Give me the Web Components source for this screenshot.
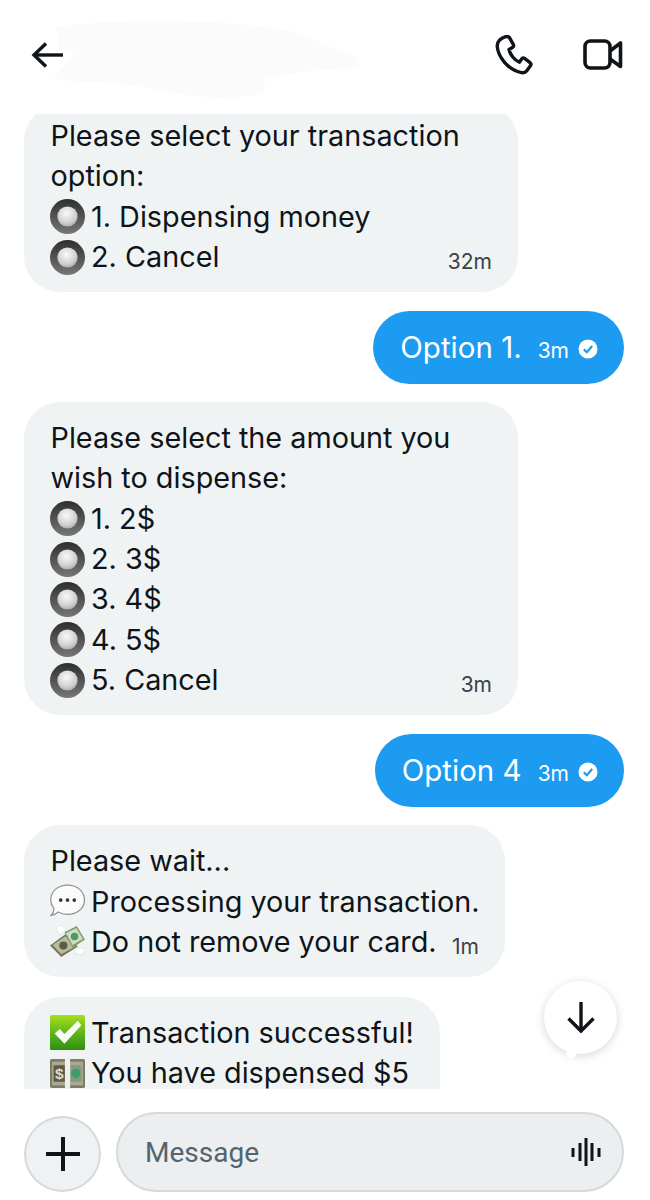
<!DOCTYPE html>
<html>
<head>
<meta charset="utf-8">
<title>Chat</title>
<style>
  html, body { margin: 0; padding: 0; background: #fff; }
  body { width: 650px; height: 1200px; overflow: hidden; font-family: Inter, "Liberation Sans", sans-serif; color: #0f1419; }
</style>
</head>
<body>
<chat-screen>
  <chat-header slot="header"></chat-header>
  <chat-bubble first time="32m">
    <div>Please select your transaction</div>
    <div>option:</div>
    <chat-line icon="radio">1. Dispensing money</chat-line>
    <chat-line icon="radio">2. Cancel</chat-line>
  </chat-bubble>
  <chat-reply time="3m">Option 1.</chat-reply>
  <chat-bubble time="3m">
    <div>Please select the amount you</div>
    <div>wish to dispense:</div>
    <chat-line icon="radio">1. 2$</chat-line>
    <chat-line icon="radio">2. 3$</chat-line>
    <chat-line icon="radio">3. 4$</chat-line>
    <chat-line icon="radio">4. 5$</chat-line>
    <chat-line icon="radio">5. Cancel</chat-line>
  </chat-bubble>
  <chat-reply time="3m">Option 4</chat-reply>
  <chat-bubble time="1m" narrow>
    <div>Please wait...</div>
    <chat-line icon="speech">Processing your transaction.</chat-line>
    <chat-line icon="wings">Do not remove your card.</chat-line>
  </chat-bubble>
  <chat-bubble last>
    <chat-line icon="check">Transaction successful!</chat-line>
    <chat-line icon="bills">You have dispensed $5</chat-line>
  </chat-bubble>
  <scroll-down slot="overlay"></scroll-down>
  <chat-composer slot="footer"></chat-composer>
</chat-screen>

<script>
class ChatScreen extends HTMLElement {
  constructor() {
    super();
    this.attachShadow({mode: 'open'}).innerHTML = `
      <style>
        :host { display: flex; flex-direction: column; width: 650px; height: 1200px; position: relative; background: #fff; }
        .messages { height: 975px; flex: none; overflow: hidden; display: flex; flex-direction: column; gap: 18.5px; padding: 0 26px 0 24px; box-sizing: border-box; }
      </style>
      <slot name="header"></slot>
      <div class="messages"><slot></slot></div>
      <slot name="overlay"></slot>
      <slot name="footer"></slot>`;
  }
}

class ChatHeader extends HTMLElement {
  constructor() {
    super();
    this.attachShadow({mode: 'open'}).innerHTML = `
      <style>
        :host { display: flex; align-items: center; justify-content: space-between; height: 114px; padding: 0 27px 4px 30px; box-sizing: border-box; position: relative; color: #0f1419; flex: none; }
        .smudge { position: absolute; left: 50px; top: 18px; }
        .actions { display: flex; align-items: center; gap: 50px; }
        svg { display: block; position: relative; }
      </style>
      <svg class="smudge" width="314" height="82" viewBox="0 0 262 82" preserveAspectRatio="none"><path fill="#fbfbfb" d="M6 8 C60 1 150 0 205 14 L228 26 L258 40 L258 50 L210 54 L180 60 L178 76 C150 82 110 80 84 70 L40 64 L2 62 L20 36 L6 28 Z"/></svg>
      <svg width="34" height="26" viewBox="0 0 34 26" fill="none" stroke="currentColor" stroke-width="3.4"><path d="M4 13 H33"/><path d="M16 1.5 L4 13 L16 24.5"/></svg>
      <div class="actions">
        <svg width="38" height="40" viewBox="0 0 38 40" fill="none" stroke="currentColor" stroke-width="3.4" stroke-linejoin="round"><path d="M10 1.8 C6 3 2 6.5 2.2 11 C2.8 21 12.5 35 26.5 37.6 C28.8 38 30.6 37.4 31.6 36 L35.6 30.5 C36.2 29.4 36 28.4 35 27.6 L29.6 23.4 C28.6 22.8 27.6 22.9 26.8 23.8 L24.4 27.2 C19.5 25.2 15 19.5 14 14.4 L17.4 12.6 C18.6 11.8 18.9 10.8 18.4 9.6 L14.6 2.8 C13.8 1.6 11.8 1.2 10 1.8 Z"/></svg>
        <svg width="40" height="32" viewBox="0 0 40 32" fill="none" stroke="currentColor" stroke-width="3.6" stroke-linejoin="round"><rect x="2" y="2" width="25" height="27" rx="5.5"/><path d="M27 12 L37.5 4 V27.5 L27 20"/></svg>
      </div>`;
  }
}

const ICONS = {
  radio: `<defs>
      <linearGradient id="ro" x1="0" y1="0" x2="0" y2="1"><stop offset="0" stop-color="#2f2f2f"/><stop offset="1" stop-color="#777"/></linearGradient>
      <radialGradient id="ri" cx=".45" cy=".35" r=".8"><stop offset="0" stop-color="#fafafa"/><stop offset=".6" stop-color="#cfcfcf"/><stop offset="1" stop-color="#8f8f8f"/></radialGradient>
    </defs><circle cx="17" cy="17" r="17" fill="url(#ro)"/><circle cx="17" cy="17" r="9.8" fill="url(#ri)"/>`,
  speech: `<path d="M17 1 C26.5 1 33.5 7.5 33.5 15.5 C33.5 23.5 26.5 29.5 17 29.5 C13.5 29.5 10.5 28.6 8 27.2 C6 29 3.5 30.4 1 30.6 C3 28.6 4 26 3.8 23.6 C1.8 21.2 .7 18.5 .7 15.5 C.7 7.5 7.5 1 17 1 Z" fill="#fbfbfb" stroke="#8f9396" stroke-width="1.2"/>
    <circle cx="10.4" cy="15.6" r="1.8" fill="#333"/><circle cx="17" cy="15.6" r="1.8" fill="#333"/><circle cx="23.6" cy="15.6" r="1.8" fill="#333"/>`,
  wings: `<path d="M6 4 C8 0 12 -1 13 2 C15 1 16 4 14 6 L9 10 Z M24 24 C28 21 33 22 34 25 C33 29 28 29 25 28 Z" fill="#fff" stroke="#d5d8d9" stroke-width=".6"/>
    <path d="M0 20 L15 9 L27 21 L11 31 Z" fill="#75765a"/>
    <path d="M2.5 19.5 L15 11 L24.5 21 L11 28.5 Z" fill="#b9bb9f"/>
    <path d="M14 7 L26 1 L34 14 L22 22 Z" fill="#7f9a70"/>
    <path d="M15.5 8 L25.5 3 L32 13.5 L22 19.5 Z" fill="#cfdcc0"/>
    <circle cx="23.8" cy="11.2" r="3.6" fill="#4f9a63"/>
    <circle cx="13" cy="20" r="4" fill="#5c5d42"/>`,
  check: `<defs><linearGradient id="cg" x1="0" y1="0" x2="0" y2="1"><stop offset="0" stop-color="#a4e01c"/><stop offset=".55" stop-color="#5cb21a"/><stop offset="1" stop-color="#2f8f14"/></linearGradient></defs>
    <rect width="34" height="34" rx="1.5" fill="url(#cg)"/><path d="M4.5 18 L9.5 13.5 L14 18.5 L27 5.5 L30.5 10 L14 28 Z" fill="#f7fbf2"/>`,
  bills: `<rect y="3" width="34" height="28" rx="1.5" fill="#7d7c66"/>
    <rect x="2" y="5.5" width="30" height="23" fill="#a8a98f"/>
    <rect x="3.5" y="9" width="11" height="16" fill="#5f5a40"/>
    <text x="9" y="22.5" font-size="15" font-weight="700" fill="#dcdcc8" text-anchor="middle" font-family="Liberation Sans, sans-serif">$</text>
    <rect x="20" y="9" width="10.5" height="16" fill="#7f9c83"/><circle cx="25" cy="17" r="4.4" fill="#3f9b6b"/>
    <rect x="14.5" y="1" width="5" height="32" fill="#eef0ee"/>`
};

class ChatLine extends HTMLElement {
  constructor() {
    super();
    const icon = ICONS[this.getAttribute('icon')] || '';
    this.attachShadow({mode: 'open'}).innerHTML = `
      <style>
        :host { display: flex; align-items: center; gap: 6.5px; margin-left: -1px; white-space: nowrap; }
        svg { width: 35px; height: 35px; flex: none; display: block; }
      </style>
      <svg viewBox="0 0 34 34">${icon}</svg><span><slot></slot></span>`;
  }
}

class ChatBubble extends HTMLElement {
  constructor() {
    super();
    const time = this.getAttribute('time');
    this.attachShadow({mode: 'open'}).innerHTML = `
      <style>
        :host { display: block; position: relative; flex: none; box-sizing: border-box; width: 494px; padding: 16px 26px 15px 26.5px; background: #eff3f4; border-radius: 36px; font-size: 28.8px; line-height: 40.3px; color: #0f1419; }
        :host([first]) { margin-top: -9px; padding-top: 11px; }
        :host([narrow]) { width: 481px; }
        :host([last]) { width: 416px; padding-bottom: 60px; margin-top: 1px; }
        .time { position: absolute; right: 26px; bottom: 17px; font-size: 21px; line-height: 26px; color: #3b4148; }
        .time:empty { display: none; }
      </style>
      <slot></slot><span class="time">${time || ''}</span>`;
  }
}

class ChatReply extends HTMLElement {
  constructor() {
    super();
    const time = this.getAttribute('time');
    this.attachShadow({mode: 'open'}).innerHTML = `
      <style>
        :host { display: flex; align-items: center; flex: none; align-self: flex-end; box-sizing: border-box; height: 73px; width: max-content; padding: 0 26px 0 27px; background: #1d9bf0; border-radius: 37px; color: #fff; font-size: 29.5px; white-space: nowrap; }
        .time { font-size: 21px; margin-left: 16px; margin-top: 6px; }
        svg { width: 20px; height: 20px; margin-left: 9px; margin-top: 4px; display: block; }
      </style>
      <span><slot></slot></span><span class="time">${time}</span>
      <svg viewBox="0 0 20 20"><circle cx="10" cy="10" r="9.5" fill="#fff"/><path d="M5.8 10.4 L8.8 13.2 L14.2 7" fill="none" stroke="#1d9bf0" stroke-width="2.2"/></svg>`;
  }
}

class ScrollDown extends HTMLElement {
  constructor() {
    super();
    this.attachShadow({mode: 'open'}).innerHTML = `
      <style>
        :host { position: absolute; left: 544px; top: 981px; width: 73px; height: 73px; border-radius: 50%; background: #fff; box-shadow: 0 2px 10px rgba(0,0,0,.16); display: flex; align-items: center; justify-content: center; color: #0f1419; }
        :host::after { content: ""; position: absolute; left: 22px; bottom: -4px; width: 10px; height: 8px; background: #fff; border-radius: 50%; }
        svg { display: block; }
      </style>
      <svg width="28" height="32" viewBox="0 0 28 32" fill="none" stroke="currentColor" stroke-width="3.4"><path d="M14 0 V29"/><path d="M1.5 16.5 L14 29 L26.5 16.5"/></svg>`;
  }
}

class ChatComposer extends HTMLElement {
  constructor() {
    super();
    this.attachShadow({mode: 'open'}).innerHTML = `
      <style>
        :host { display: flex; align-items: flex-start; gap: 15px; flex: none; padding: 23px 26px 0 24px; height: 111px; box-sizing: border-box; }
        .plus { width: 77px; height: 76px; margin-top: 4px; box-sizing: border-box; flex: none; border-radius: 50%; background: #eff1f2; border: 2px solid #d3dadd; display: flex; align-items: center; justify-content: center; }
        .input { flex: 1; height: 80px; box-sizing: border-box; border-radius: 40px; background: #eceef0; border: 2px solid #d3dadd; display: flex; align-items: center; justify-content: space-between; padding: 0 21px 0 27px; }
        .input span { font-family: Roboto, sans-serif; font-size: 28px; color: #536471; }
        svg { display: block; }
      </style>
      <div class="plus"><svg width="36" height="36" viewBox="0 0 36 36" stroke="#0f1419" stroke-width="4"><path d="M18 1 V35 M1 18 H35"/></svg></div>
      <div class="input"><span>Message</span>
        <svg width="30" height="30" viewBox="0 0 30 30" stroke="#0f1419" stroke-width="3"><path d="M2 11 V20 M9 6 V24 M15 1 V29 M21 6 V24 M28 11 V20"/></svg>
      </div>`;
  }
}

customElements.define('chat-screen', ChatScreen);
customElements.define('chat-header', ChatHeader);
customElements.define('chat-line', ChatLine);
customElements.define('chat-bubble', ChatBubble);
customElements.define('chat-reply', ChatReply);
customElements.define('scroll-down', ScrollDown);
customElements.define('chat-composer', ChatComposer);
</script>
</body>
</html>
